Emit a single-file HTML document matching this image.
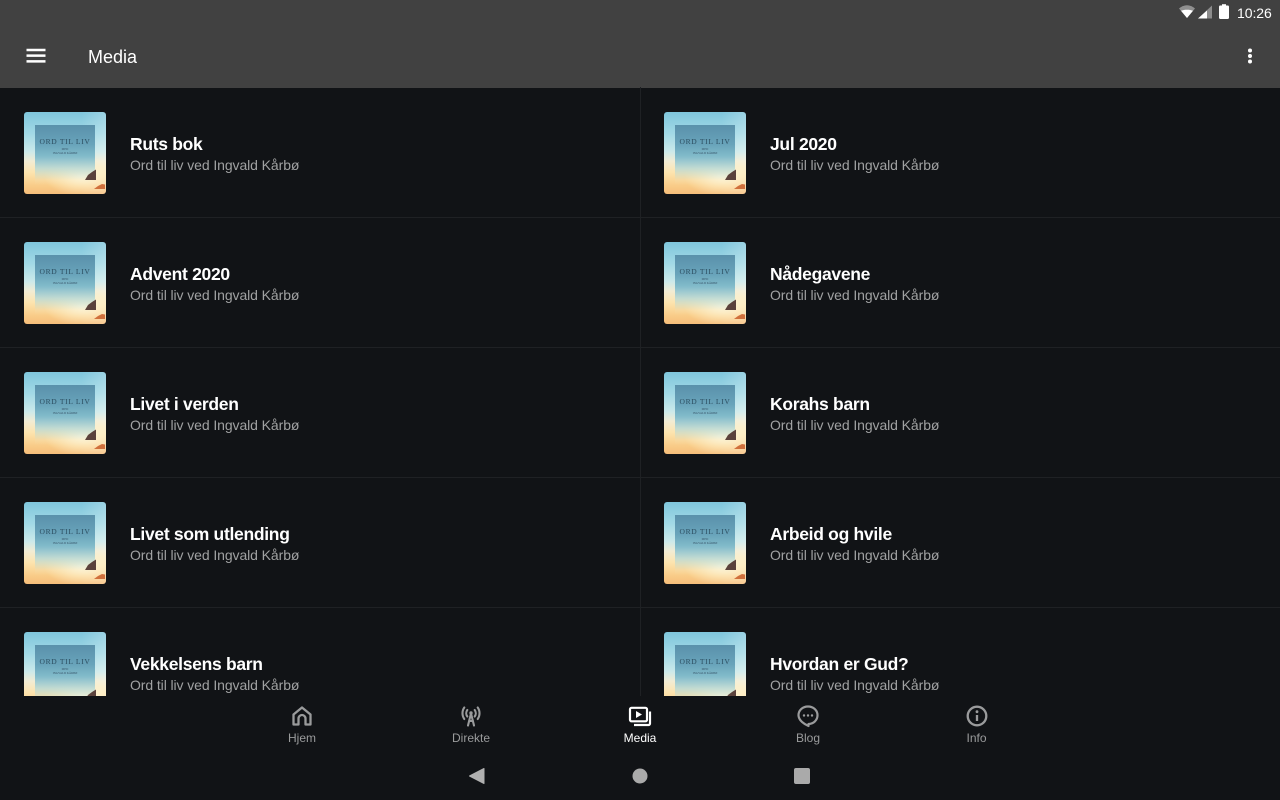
<!DOCTYPE html>
<html><head><meta charset="utf-8"><title>Media</title>
<style>
*{box-sizing:border-box;margin:0;padding:0}
html,body{width:1280px;height:800px;overflow:hidden;background:#111316;font-family:"Liberation Sans",sans-serif}
.abs,.t,.s,.th,.ln{position:absolute}
.top{position:absolute;left:0;top:0;width:1280px;height:88px;background:#414141}
.ln{background:#1f2124}
.th{width:82px;height:82px;border-radius:3px;overflow:hidden;background:radial-gradient(ellipse 38px 20px at 58px 64px,rgba(255,250,225,.95) 0%,rgba(255,245,210,.5) 55%,rgba(255,240,200,0) 100%),linear-gradient(90deg,rgba(255,255,255,0) 70%,rgba(255,255,255,.22) 100%),linear-gradient(180deg,#7fc6dc 0%,#a2d9e6 26%,#cbe9ea 48%,#f2ecd4 60%,#fde4ae 74%,#f9cc88 90%,#f6bd7a 100%)}
.th i{position:absolute;left:11px;top:13px;width:60px;height:60px;background:linear-gradient(180deg,#5a91ab 0%,#68a3ba 32%,#82bbca 52%,rgba(170,212,216,.7) 72%,rgba(235,230,200,.15) 92%,rgba(240,225,190,0) 100%)}
.th b{position:absolute;left:0;width:82px;text-align:center;font-family:"Liberation Serif",serif;font-weight:400;color:#2c4e60;white-space:nowrap}
.th .a{top:25px;font-size:7.5px;letter-spacing:.7px;line-height:9px}
.th .b{top:35px;font-size:3px;line-height:4px;color:#38566a}
.th .c{top:39px;font-size:3px;line-height:4px;color:#38566a}
.th svg{position:absolute;left:0;top:0}
.t{font-size:17.5px;font-weight:700;color:#fff;line-height:22px;white-space:nowrap;letter-spacing:-.3px}
.s{font-size:14px;color:#a0a1a2;line-height:18px;white-space:nowrap;width:200px;letter-spacing:-.09px}
.clip{position:absolute;left:0;top:87px;width:1280px;height:609px;overflow:hidden}
.nav{position:absolute;top:731px;width:100px;text-align:center;font-size:12px;line-height:14px;color:#9a9b9c}
</style></head><body>
<div class="top"></div>

<svg class="abs" style="left:1176px;top:3px" width="64" height="18" viewBox="0 0 64 18">
<path d="M3 5.500C5.500 3.300 8 2.200 11 2.200s5.500 1.100 8 3.300L11 15z" fill="#8f8f8f"/>
<path d="M5 7.800C6.800 7 8.800 6.700 11 6.700s4.200.3 6 1.100L11 15z" fill="#fff"/>
<path d="M36 2.500V15.500H22z" fill="#8c8c8c"/><path d="M31 7.500V15.500H22z" fill="#fff"/>
<rect x="43" y="2.500" width="10" height="13.500" rx="1.200" fill="#fff"/><rect x="46" y="1.200" width="4" height="2" fill="#fff"/>
</svg>
<div class="abs" style="left:1237px;top:5px;font-size:14px;line-height:16px;color:#fff;letter-spacing:-.05px;white-space:nowrap">10:26</div>

<svg class="abs" style="left:26px;top:48px" width="20" height="16" viewBox="0 0 20 16"><path d="M.5 .7h19v2.500H.5zM.5 6.400h19v2.500H.5zM.5 12.100h19v2.500H.5z" fill="#fff"/></svg>
<div class="abs" style="left:88px;top:46px;font-size:18px;line-height:22px;color:#fff;white-space:nowrap">Media</div>
<svg class="abs" style="left:1246px;top:47px" width="8" height="18" viewBox="0 0 8 18"><circle cx="4" cy="3.500" r="2" fill="#fff"/><circle cx="4" cy="9" r="2" fill="#fff"/><circle cx="4" cy="14.500" r="2" fill="#fff"/></svg>

<div class="clip">
<div class="ln" style="left:640px;top:0;width:1px;height:609px"></div>
<div class="ln" style="left:0;top:130px;width:1280px;height:1px"></div>
<div class="ln" style="left:0;top:260px;width:1280px;height:1px"></div>
<div class="ln" style="left:0;top:390px;width:1280px;height:1px"></div>
<div class="ln" style="left:0;top:520px;width:1280px;height:1px"></div>

<div class="th" style="left:24px;top:25px"><i></i><b class="a">ORD TIL LIV</b><b class="b">MED</b><b class="c">INGVALD KÅRBØ</b><svg width="82" height="82"><path d="M61 68l3-5 4-3 4-2.500V68z" fill="#5b423c"/><path d="M70 77l4-3 4-2 3 .5V77z" fill="#d0703c"/></svg></div>
<div class="t" style="left:130px;top:46px">Ruts bok</div><div class="s" style="left:130px;top:69px">Ord til liv ved Ingvald Kårbø</div>

<div class="th" style="left:664px;top:25px"><i></i><b class="a">ORD TIL LIV</b><b class="b">MED</b><b class="c">INGVALD KÅRBØ</b><svg width="82" height="82"><path d="M61 68l3-5 4-3 4-2.500V68z" fill="#5b423c"/><path d="M70 77l4-3 4-2 3 .5V77z" fill="#d0703c"/></svg></div>
<div class="t" style="left:770px;top:46px">Jul 2020</div><div class="s" style="left:770px;top:69px">Ord til liv ved Ingvald Kårbø</div>

<div class="th" style="left:24px;top:155px"><i></i><b class="a">ORD TIL LIV</b><b class="b">MED</b><b class="c">INGVALD KÅRBØ</b><svg width="82" height="82"><path d="M61 68l3-5 4-3 4-2.500V68z" fill="#5b423c"/><path d="M70 77l4-3 4-2 3 .5V77z" fill="#d0703c"/></svg></div>
<div class="t" style="left:130px;top:176px">Advent 2020</div><div class="s" style="left:130px;top:199px">Ord til liv ved Ingvald Kårbø</div>

<div class="th" style="left:664px;top:155px"><i></i><b class="a">ORD TIL LIV</b><b class="b">MED</b><b class="c">INGVALD KÅRBØ</b><svg width="82" height="82"><path d="M61 68l3-5 4-3 4-2.500V68z" fill="#5b423c"/><path d="M70 77l4-3 4-2 3 .5V77z" fill="#d0703c"/></svg></div>
<div class="t" style="left:770px;top:176px">Nådegavene</div><div class="s" style="left:770px;top:199px">Ord til liv ved Ingvald Kårbø</div>

<div class="th" style="left:24px;top:285px"><i></i><b class="a">ORD TIL LIV</b><b class="b">MED</b><b class="c">INGVALD KÅRBØ</b><svg width="82" height="82"><path d="M61 68l3-5 4-3 4-2.500V68z" fill="#5b423c"/><path d="M70 77l4-3 4-2 3 .5V77z" fill="#d0703c"/></svg></div>
<div class="t" style="left:130px;top:306px">Livet i verden</div><div class="s" style="left:130px;top:329px">Ord til liv ved Ingvald Kårbø</div>

<div class="th" style="left:664px;top:285px"><i></i><b class="a">ORD TIL LIV</b><b class="b">MED</b><b class="c">INGVALD KÅRBØ</b><svg width="82" height="82"><path d="M61 68l3-5 4-3 4-2.500V68z" fill="#5b423c"/><path d="M70 77l4-3 4-2 3 .5V77z" fill="#d0703c"/></svg></div>
<div class="t" style="left:770px;top:306px">Korahs barn</div><div class="s" style="left:770px;top:329px">Ord til liv ved Ingvald Kårbø</div>

<div class="th" style="left:24px;top:415px"><i></i><b class="a">ORD TIL LIV</b><b class="b">MED</b><b class="c">INGVALD KÅRBØ</b><svg width="82" height="82"><path d="M61 68l3-5 4-3 4-2.500V68z" fill="#5b423c"/><path d="M70 77l4-3 4-2 3 .5V77z" fill="#d0703c"/></svg></div>
<div class="t" style="left:130px;top:436px">Livet som utlending</div><div class="s" style="left:130px;top:459px">Ord til liv ved Ingvald Kårbø</div>

<div class="th" style="left:664px;top:415px"><i></i><b class="a">ORD TIL LIV</b><b class="b">MED</b><b class="c">INGVALD KÅRBØ</b><svg width="82" height="82"><path d="M61 68l3-5 4-3 4-2.500V68z" fill="#5b423c"/><path d="M70 77l4-3 4-2 3 .5V77z" fill="#d0703c"/></svg></div>
<div class="t" style="left:770px;top:436px">Arbeid og hvile</div><div class="s" style="left:770px;top:459px">Ord til liv ved Ingvald Kårbø</div>

<div class="th" style="left:24px;top:545px"><i></i><b class="a">ORD TIL LIV</b><b class="b">MED</b><b class="c">INGVALD KÅRBØ</b><svg width="82" height="82"><path d="M61 68l3-5 4-3 4-2.500V68z" fill="#5b423c"/><path d="M70 77l4-3 4-2 3 .5V77z" fill="#d0703c"/></svg></div>
<div class="t" style="left:130px;top:566px">Vekkelsens barn</div><div class="s" style="left:130px;top:589px">Ord til liv ved Ingvald Kårbø</div>

<div class="th" style="left:664px;top:545px"><i></i><b class="a">ORD TIL LIV</b><b class="b">MED</b><b class="c">INGVALD KÅRBØ</b><svg width="82" height="82"><path d="M61 68l3-5 4-3 4-2.500V68z" fill="#5b423c"/><path d="M70 77l4-3 4-2 3 .5V77z" fill="#d0703c"/></svg></div>
<div class="t" style="left:770px;top:566px">Hvordan er Gud?</div><div class="s" style="left:770px;top:589px">Ord til liv ved Ingvald Kårbø</div>
</div>

<!-- bottom nav -->
<svg class="abs" style="left:290px;top:704px" width="24" height="24" viewBox="0 0 24 24" fill="none" stroke="#9a9b9c" stroke-width="2.300" stroke-linejoin="round"><path d="M3.500 10.500L12 3.500l8.500 7V20.500h-5v-6a3.500 3.500 0 0 0-7 0v6h-5z"/></svg>
<svg class="abs" style="left:459px;top:704px" width="24" height="24" viewBox="0 0 24 24" fill="none" stroke="#9a9b9c" stroke-width="2.100" stroke-linecap="round"><circle cx="12" cy="9" r="1.700" fill="#9a9b9c" stroke="none"/><path d="M12 9.500L9 21.500M12 9.500l3 12M10 17h4"/><path d="M8.300 6a5.500 5.500 0 0 0 0 6.500M15.700 6a5.500 5.500 0 0 1 0 6.500M5.300 3.500a10 10 0 0 0 0 11.500M18.700 3.500a10 10 0 0 1 0 11.500"/></svg>
<svg class="abs" style="left:628px;top:704px" width="24" height="24" viewBox="0 0 24 24" fill="none" stroke="#fff" stroke-width="2.200"><rect x="2" y="3.800" width="17" height="13.500" rx="1.500"/><path d="M22 7.500V19.500a1.500 1.500 0 0 1-1.500 1.500H6"/><path d="M8 7l6 3.500-6 3.500z" fill="#fff" stroke="none"/></svg>
<svg class="abs" style="left:796px;top:704px" width="24" height="24" viewBox="0 0 24 24" fill="none" stroke="#9a9b9c" stroke-width="2.200"><path d="M12 2.500c5.500 0 9.500 3.900 9.500 8.800 0 4.800-4 8.700-9 8.700v2c-4-1.700-10-5.500-10-10.700 0-4.900 4-8.800 9.500-8.800z" stroke-linejoin="round"/><circle cx="8" cy="11.500" r="1.200" fill="#9a9b9c" stroke="none"/><circle cx="12" cy="11.500" r="1.200" fill="#9a9b9c" stroke="none"/><circle cx="16" cy="11.500" r="1.200" fill="#9a9b9c" stroke="none"/></svg>
<svg class="abs" style="left:964.500px;top:704px" width="24" height="24" viewBox="0 0 24 24" fill="none" stroke="#9a9b9c" stroke-width="2.300"><circle cx="12" cy="12" r="9.300"/><path d="M12 11v6"/><circle cx="12" cy="7.700" r="1.400" fill="#9a9b9c" stroke="none"/></svg>

<div class="nav" style="left:252px">Hjem</div>
<div class="nav" style="left:421px">Direkte</div>
<div class="nav" style="left:590px;color:#fff">Media</div>
<div class="nav" style="left:758px">Blog</div>
<div class="nav" style="left:926.500px">Info</div>

<svg class="abs" style="left:468px;top:766px" width="344" height="20" viewBox="0 0 344 20"><path d="M16 2.500V17.500L1.500 10z" fill="#b0b0b0" stroke="#b0b0b0" stroke-linejoin="round"/><circle cx="172" cy="10" r="7.500" fill="#aaa"/><rect x="326" y="2" width="16" height="16" rx="2" fill="#aaa"/></svg>
</body></html>
